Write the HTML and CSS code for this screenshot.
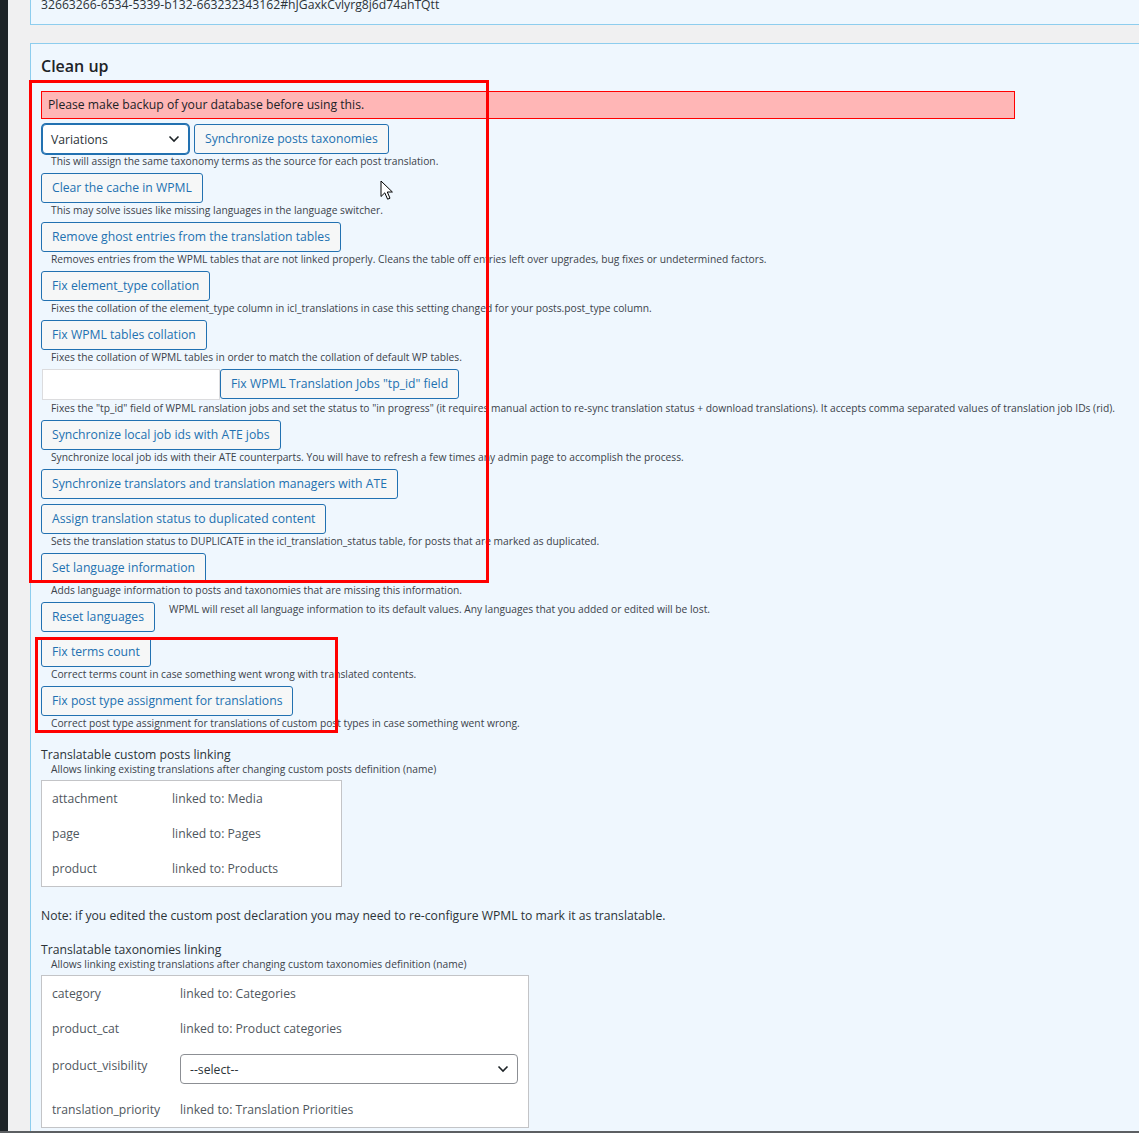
FILE: index.html
```html
<!DOCTYPE HTML>
<html>
    <head>
        <title>WPML - Troubleshooting</title>
        <link rel="stylesheet" href="styles.css">
    </head>
    <body>

        <div class="screen">

            <div class="sidebar"></div>

            <div class="main">

                <div class="panel panel-top">32663266-6534-5339-b132-663232343162#hJGaxkCvlyrg8j6d74ahTQtt</div>

                <div class="panel">

                    <h2 class="title">Clean up</h2>

                    <div class="warning">Please make backup of your database before using this.</div>

                    <div class="tool">
                        <div class="row">
                            <div class="select select-focus select-small">
                                <span>Variations</span>
                                <svg class="chevron" width="12" height="8" viewBox="0 0 12 8"><path d="M1.5 1.5 L6 6 L10.5 1.5" fill="none" stroke="#1d2327" stroke-width="1.6"/></svg>
                            </div>
                            <button class="btn">Synchronize posts taxonomies</button>
                        </div>
                        <small class="desc">This will assign the same taxonomy terms as the source for each post translation.</small>
                    </div>

                    <div class="tool">
                        <button class="btn">Clear the cache in WPML</button>
                        <small class="desc">This may solve issues like missing languages in the language switcher.</small>
                    </div>

                    <div class="tool">
                        <button class="btn">Remove ghost entries from the translation tables</button>
                        <small class="desc">Removes entries from the WPML tables that are not linked properly. Cleans the table off entries left over upgrades, bug fixes or undetermined factors.</small>
                    </div>

                    <div class="tool">
                        <button class="btn">Fix element_type collation</button>
                        <small class="desc">Fixes the collation of the element_type column in icl_translations in case this setting changed for your posts.post_type column.</small>
                    </div>

                    <div class="tool">
                        <button class="btn">Fix WPML tables collation</button>
                        <small class="desc">Fixes the collation of WPML tables in order to match the collation of default WP tables.</small>
                    </div>

                    <div class="tool tool-input">
                        <div class="row">
                            <input type="text" class="text-input">
                            <button class="btn">Fix WPML Translation Jobs "tp_id" field</button>
                        </div>
                        <small class="desc">Fixes the "tp_id" field of WPML ranslation jobs and set the status to "in progress" (it requires manual action to re-sync translation status + download translations). It accepts comma separated values of translation job IDs (rid).</small>
                    </div>

                    <div class="tool">
                        <button class="btn">Synchronize local job ids with ATE jobs</button>
                        <small class="desc">Synchronize local job ids with their ATE counterparts. You will have to refresh a few times any admin page to accomplish the process.</small>
                    </div>

                    <div class="tool">
                        <button class="btn">Synchronize translators and translation managers with ATE</button>
                    </div>

                    <div class="tool">
                        <button class="btn">Assign translation status to duplicated content</button>
                        <small class="desc">Sets the translation status to DUPLICATE in the icl_translation_status table, for posts that are marked as duplicated.</small>
                    </div>

                    <div class="tool">
                        <button class="btn">Set language information</button>
                        <small class="desc">Adds language information to posts and taxonomies that are missing this information.</small>
                    </div>

                    <div class="tool">
                        <div class="row row-reset">
                            <button class="btn">Reset languages</button>
                            <small class="desc desc-side">WPML will reset all language information to its default values. Any languages that you added or edited will be lost.</small>
                        </div>
                    </div>

                    <div class="tool">
                        <button class="btn">Fix terms count</button>
                        <small class="desc">Correct terms count in case something went wrong with translated contents.</small>
                    </div>

                    <div class="tool">
                        <button class="btn">Fix post type assignment for translations</button>
                        <small class="desc">Correct post type assignment for translations of custom post types in case something went wrong.</small>
                    </div>

                    <h4 class="subtitle subtitle-first">Translatable custom posts linking</h4>
                    <small class="desc desc-sub">Allows linking existing translations after changing custom posts definition (name)</small>

                    <div class="link-table link-posts">
                        <div class="link-row"><span class="link-name">attachment</span><span>linked to: Media</span></div>
                        <div class="link-row"><span class="link-name">page</span><span>linked to: Pages</span></div>
                        <div class="link-row"><span class="link-name">product</span><span>linked to: Products</span></div>
                    </div>

                    <p class="note">Note: if you edited the custom post declaration you may need to re-configure WPML to mark it as translatable.</p>

                    <h4 class="subtitle">Translatable taxonomies linking</h4>
                    <small class="desc desc-sub">Allows linking existing translations after changing custom taxonomies definition (name)</small>

                    <div class="link-table link-tax">
                        <div class="link-row"><span class="link-name">category</span><span>linked to: Categories</span></div>
                        <div class="link-row"><span class="link-name">product_cat</span><span>linked to: Product categories</span></div>
                        <div class="link-row link-row-select">
                            <span class="link-name">product_visibility</span>
                            <div class="select select-wide">
                                <span>--select--</span>
                                <svg class="chevron" width="12" height="8" viewBox="0 0 12 8"><path d="M1.5 1.5 L6 6 L10.5 1.5" fill="none" stroke="#1d2327" stroke-width="1.6"/></svg>
                            </div>
                        </div>
                        <div class="link-row"><span class="link-name">translation_priority</span><span>linked to: Translation Priorities</span></div>
                    </div>

                </div>

            </div>

            <!-- red highlight boxes drawn over the screenshot -->
            <div class="mark mark-main"></div>
            <div class="mark mark-terms"></div>

            <svg class="cursor" width="14" height="21" viewBox="0 0 14 21"><path d="M1 1 L1 16.5 L4.8 12.8 L7.6 19.2 L10 18.2 L7.3 12 L12.4 12 Z" fill="#fff" stroke="#000" stroke-width="1" stroke-linejoin="round"/></svg>

        </div>

    </body>
</html>
```

FILE: styles.css
```css
*{
    margin: 0;
    padding: 0;
    box-sizing: border-box;
}

body, html{
    height: 100%;
    background: #f0f0f1;
    font-family: "Open Sans", "Noto Sans", sans-serif;
    font-size: 12.2px;
    color: #1d2327;
}

.screen{
    position: relative;
    display: flex;
    height: 1133px;
    overflow: hidden;
    border-bottom: 2px solid #5c5f62;
}

.sidebar{
    width: 8px;
    flex-shrink: 0;
    background: #1d2327;
}

.main{
    flex: 1;
    padding-left: 22px;
    overflow: hidden;
}

.panel{
    background: #eff7fe;
    border: 1px solid #8dcdee;
    border-right: 0;
    padding: 0 10px;
}

.panel-top{
    margin-top: -9px;
    padding-top: 5px;
    padding-bottom: 11px;
    line-height: 16px;
    color: #2c3338;
    white-space: nowrap;
}

.panel-top + .panel{
    margin-top: 18px;
    padding-top: 10px;
    height: 1200px;
}

.title{
    font-size: 16px;
    font-weight: 600;
    line-height: 24px;
    margin-bottom: 13px;
}

.warning{
    width: 974px;
    height: 28px;
    line-height: 26px;
    padding-left: 6px;
    background: #ffb6b6;
    border: 1px solid #f00;
    margin-bottom: 5px;
}

.tool{
    margin-bottom: 5px;
}

.row{
    display: flex;
    align-items: flex-start;
}

.btn{
    display: block;
    height: 30px;
    padding: 0 10px;
    font-family: inherit;
    font-size: 12.2px;
    line-height: 28px;
    color: #2271b1;
    background: #f6f7f7;
    border: 1px solid #2271b1;
    border-radius: 3px;
    white-space: nowrap;
}

.select{
    display: flex;
    align-items: center;
    justify-content: space-between;
    height: 30px;
    background: #fff;
    border: 1px solid #8c8f94;
    border-radius: 4px;
    padding: 0 8px;
    font-size: 12.2px;
    color: #2c3338;
}

.select-small{
    width: 147px;
    margin-left: 1px;
    margin-right: 5px;
}

.select-focus{
    border-color: #2271b1;
    box-shadow: 0 0 0 1px #2271b1;
}

.text-input{
    display: block;
    width: 178px;
    height: 31px;
    margin-left: 1px;
    background: #fff;
    border: 1px solid #dcdcde;
    border-radius: 0;
}

.desc{
    display: block;
    margin-left: 10px;
    font-size: 10.25px;
    line-height: 14px;
    color: #3c434a;
    white-space: nowrap;
}

.tool-input .desc{
    margin-top: 1px;
}

.desc-side{
    margin-left: 14px;
}

.subtitle{
    margin-top: 17px;
    font-size: 12.2px;
    font-weight: normal;
    line-height: 16px;
    color: #2c3338;
}

.desc-sub{
    line-height: 13px;
    margin-bottom: 4px;
}

.link-table{
    background: #fff;
    border: 1px solid #c3c4c7;
    padding: 0 10px;
    color: #50575e;
}

.link-posts{
    width: 301px;
}

.link-tax{
    width: 488px;
}

.link-row{
    display: flex;
    align-items: center;
    height: 35px;
    white-space: nowrap;
}

.link-posts .link-name{
    width: 120px;
}

.link-tax .link-name{
    width: 128px;
}

.link-row-select{
    height: 46px;
    align-items: flex-start;
    padding-top: 8px;
}

.link-row-select .link-name{
    padding-top: 3px;
}

.select-wide{
    width: 338px;
    padding-left: 9px;
}

.note{
    margin-top: 21px;
    line-height: 16px;
    color: #2c3338;
}

.subtitle + .desc + .link-table + .note + .subtitle{
    margin-top: 18px;
}

.mark{
    position: absolute;
    border: 3px solid #f00;
    pointer-events: none;
}

.mark-main{
    left: 29px;
    top: 80px;
    width: 460px;
    height: 503px;
}

.mark-terms{
    left: 35px;
    top: 637px;
    width: 303px;
    height: 96px;
}

.cursor{
    position: absolute;
    left: 380px;
    top: 180px;
}
```
